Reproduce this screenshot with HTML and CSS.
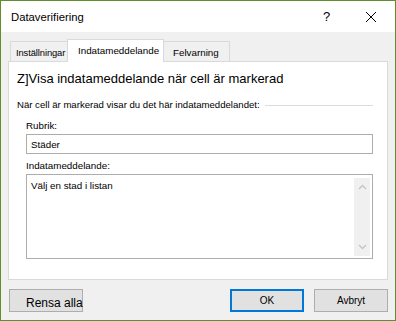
FILE: index.html
```html
<!DOCTYPE html>
<html lang="sv">
<head>
<meta charset="UTF-8" />
<title>Dataverifiering</title>
<link rel="stylesheet" href="styles.css">
</head>
<body>
  <div class="dialog">
    <div class="titlebar">
      <span class="title">Dataverifiering</span>
      <span class="help">?</span>
      <span class="close"><svg width="12" height="12" viewBox="0 0 12 12"><path d="M1 1L11 11M11 1L1 11" stroke="#000" stroke-width="1"/></svg></span>
    </div>
    <div class="body">
      <div class="tabs">
        <div class="tab first">Inställningar</div>
        <div class="tab active">Indatameddelande</div>
        <div class="tab">Felvarning</div>
      </div>
      <div class="panel">
        <div class="check">Z]Visa indatameddelande när cell är markerad</div>
        <div class="group"><span>När cell är markerad visar du det här indatameddelandet:</span><span class="rule"></span></div>
        <div class="field">
          <label>Rubrik:</label>
          <div class="input">Städer</div>
          <label>Indatameddelande:</label>
          <div class="textarea">
            <span>Välj en stad i listan</span>
            <div class="scroll">
              <svg width="9" height="6" viewBox="0 0 9 6"><path d="M1 5L4.5 1.5L8 5" fill="none" stroke="#c4c4c4" stroke-width="1.3"/></svg>
              <svg width="9" height="6" viewBox="0 0 9 6"><path d="M1 1L4.5 4.5L8 1" fill="none" stroke="#c4c4c4" stroke-width="1.3"/></svg>
            </div>
          </div>
        </div>
      </div>
      <div class="buttons">
        <button class="btn clear">Rensa alla</button>
        <span class="spacer"></span>
        <button class="btn ok">OK</button>
        <button class="btn">Avbryt</button>
      </div>
    </div>
  </div>
</body>
</html>
```

FILE: styles.css
```css
*,*::before,*::after{box-sizing:border-box;}
body{margin:0;background:#fff;font-family:"Liberation Sans",Arial,sans-serif;color:#000;}
.dialog{width:396px;height:321px;border:1px solid #5f8f2c;display:flex;flex-direction:column;background:#f0f0f0;}
.titlebar{height:31px;flex:none;background:#fff;display:flex;align-items:center;padding-left:10px;font-size:11.3px;}
.title{flex:1;}
.help{width:12px;font-size:13px;margin-right:30px;}
.close{width:12px;height:12px;margin-right:18px;display:flex;}
.body{flex:1;padding:7px 7px 0 7px;display:flex;flex-direction:column;}
.tabs{display:flex;align-items:flex-end;height:22px;flex:none;padding-left:2px;font-size:9.8px;}
.tab{height:20px;border:1px solid #d9d9d9;border-bottom:none;padding:5px 0 0 8px;width:58px;white-space:nowrap;overflow:hidden;}
.tab.first{padding-left:5px;font-size:9.4px;letter-spacing:-0.1px;}
.tab+.tab{margin-left:-1px;}
.tab.active{height:23px;margin-bottom:-1px;background:#fff;width:97px;padding:5px 0 0 10px;position:relative;z-index:1;}
.tab:last-child{width:67px;padding-left:9px;}
.panel{height:219px;flex:none;background:#fff;border:1px solid #d9d9d9;padding:8px 8px 0 8px;}
.check{font-size:13px;line-height:17px;}
.group{display:flex;align-items:center;margin-top:11px;font-size:9.6px;line-height:14px;}
.rule{flex:1;height:1px;background:#dcdcdc;margin:0 6px 0 5px;}
.field{padding:0 6px 0 9px;font-size:9.8px;}
.field label{display:block;line-height:14px;margin-top:7px;}
.input{height:20px;border:1px solid #adadad;margin-top:1px;padding:4px 4px;line-height:11px;}
.field label+.textarea{margin-top:1px;}
.field .input+label{margin-top:5px;}
.textarea{height:85px;border:1px solid #adadad;padding:3px 2px 2px 4px;display:flex;}
.textarea span{flex:1;padding-top:2px;}
.scroll{width:16px;background:#f0f0f0;display:flex;flex-direction:column;justify-content:space-between;align-items:center;padding:6px 0 6px;}
.buttons{display:flex;align-items:center;margin-top:9px;padding:0 0 0 1px;}
.spacer{flex:1;}
.btn{height:23px;width:74px;background:#e1e1e1;border:1px solid #adadad;font-family:inherit;font-size:10px;padding:0;color:#000;white-space:nowrap;}
.btn.clear{font-size:12px;padding:4px 0 0 16px;text-align:left;}
.btn.ok{border:2px solid #0078d7;margin-right:10px;}
```
